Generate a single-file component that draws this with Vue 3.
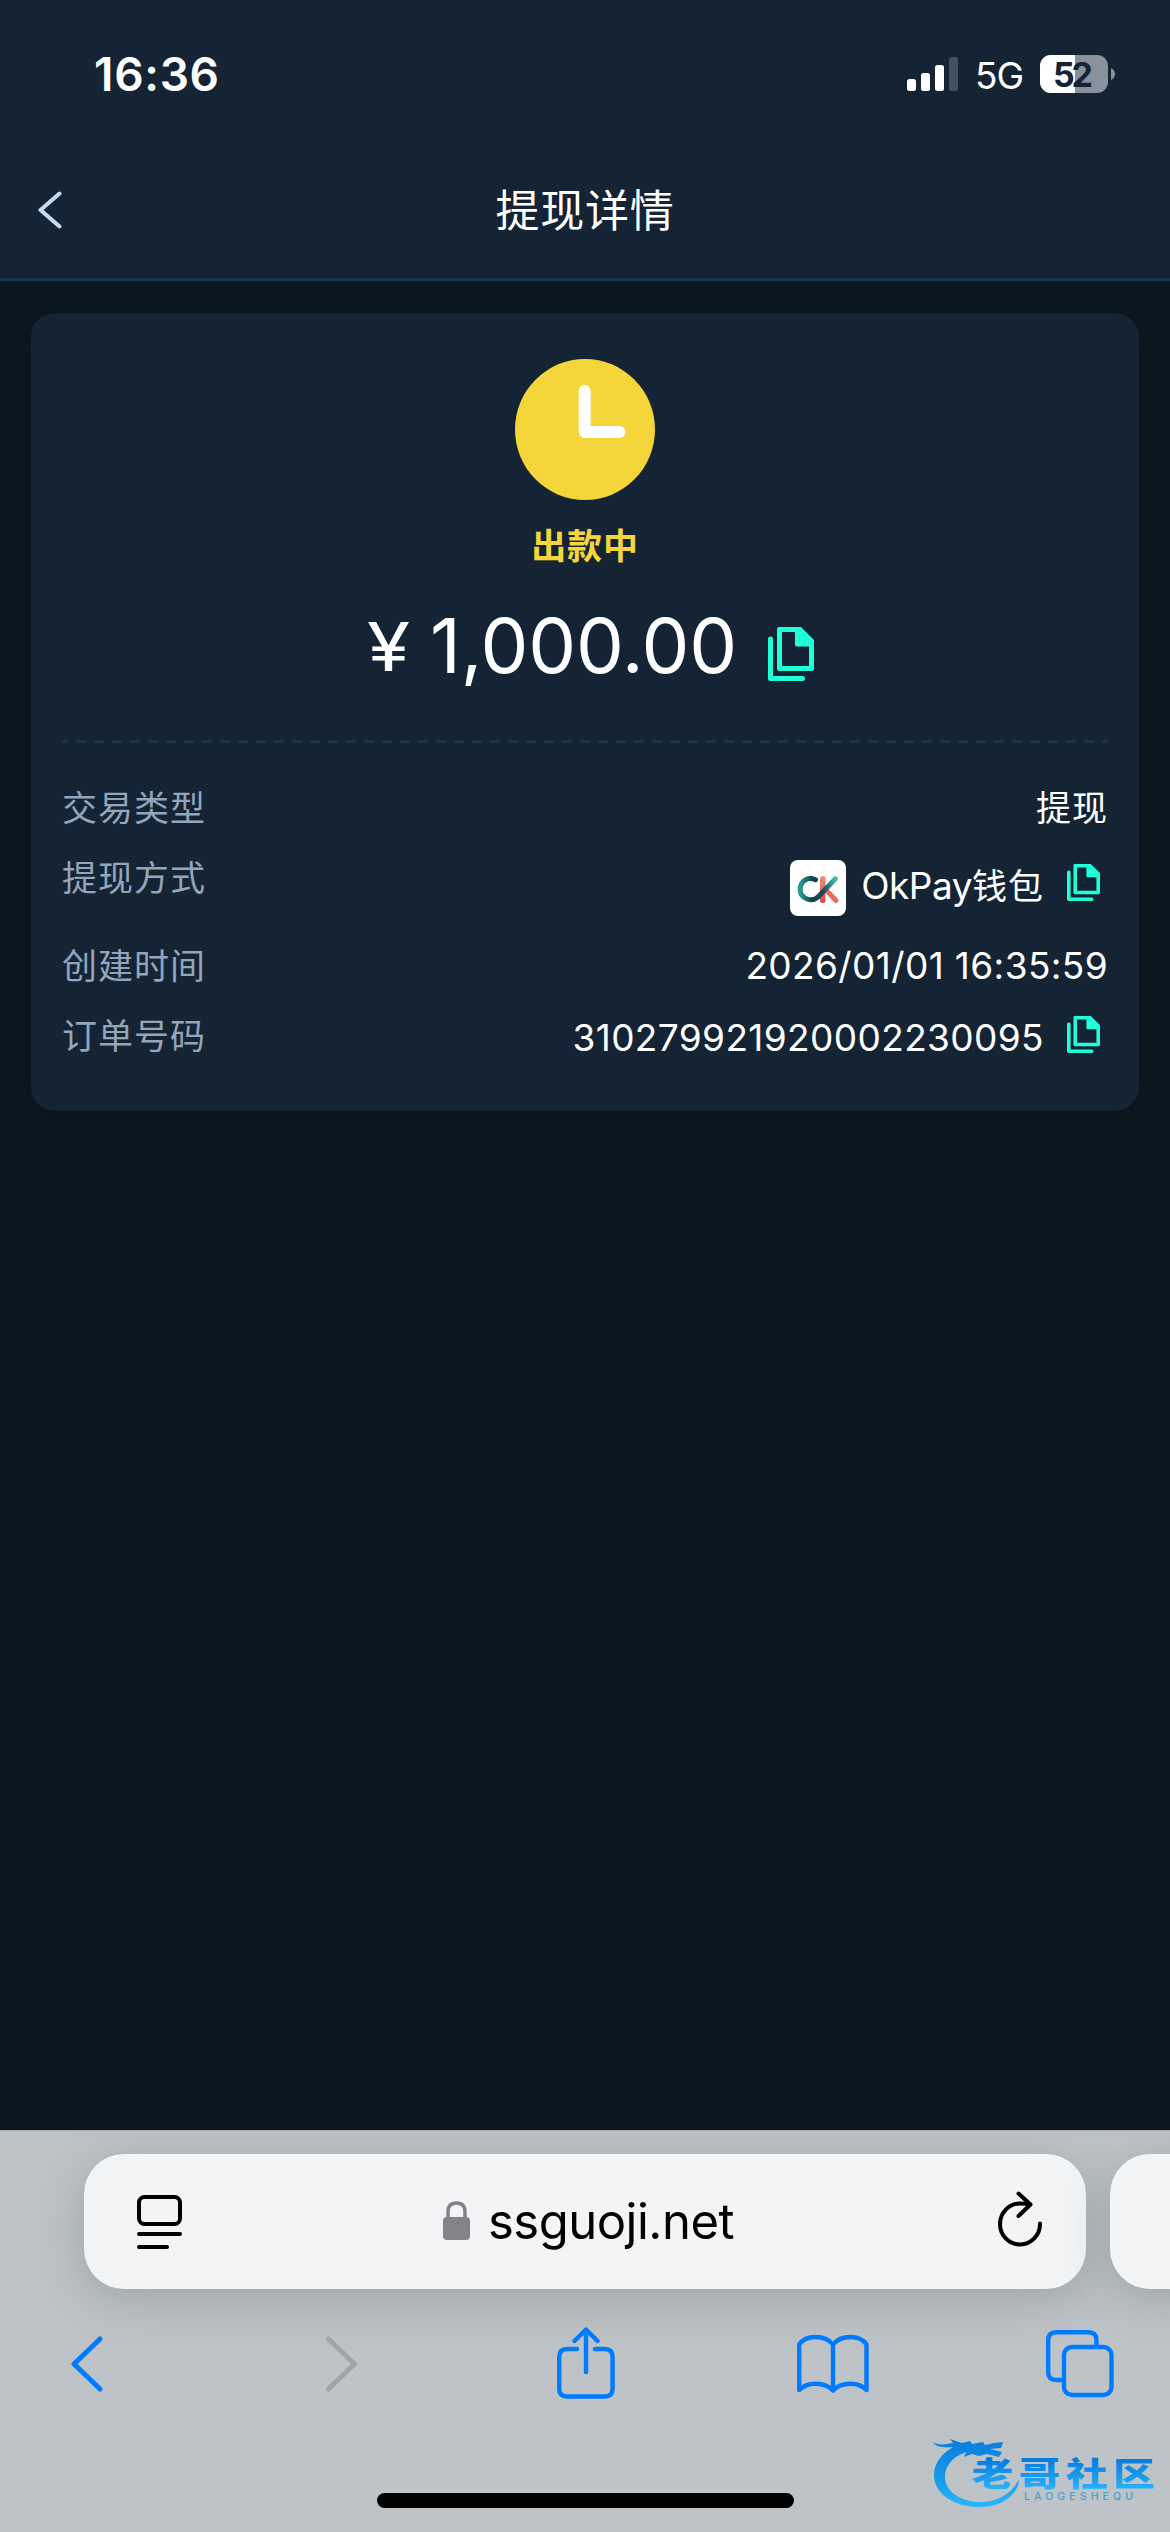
<script setup>
import { h } from 'vue'

const CopyIcon = () =>
  h('svg', { viewBox: '0 0 46 54', preserveAspectRatio: 'none', 'aria-hidden': 'true' }, [
    h('path', {
      d: 'M2.5 12V51.5H34.5',
      fill: 'none', stroke: '#1fffd8', 'stroke-width': 5,
      'stroke-linecap': 'round', 'stroke-linejoin': 'round',
    }),
    h('path', {
      d: 'M11 0H33L46 13V42Q46 44 44 44H11Q9 44 9 42V2Q9 0 11 0ZM14 5V39H41V19.500H29Q27 19.500 27 17.500V5Z',
      fill: '#1fffd8', 'fill-rule': 'evenodd',
    }),
  ])

const rows = [
  { key: 'type', label: '交易类型', cjk: '提现' },
  { key: 'method', label: '提现方式', logo: true, text: 'OkPay', cjk: '钱包', copy: true },
  { key: 'time', label: '创建时间', text: '2026/01/01 16:35:59' },
  { key: 'order', label: '订单号码', text: '310279921920002230095', copy: true },
]
</script>

<template>
  <div class="screen">
    <header class="top">
      <div class="status">
        <span class="clock">16:36</span>
        <div class="indicators">
          <svg class="signal" viewBox="0 0 51 34">
            <rect x="0" y="22" width="9" height="12" rx="2.500" fill="#fff" />
            <rect x="14" y="16" width="9" height="18" rx="2.500" fill="#fff" />
            <rect x="28" y="8" width="9" height="26" rx="2.500" fill="#fff" />
            <rect x="42" y="0" width="9" height="34" rx="2.500" fill="#43505d" />
          </svg>
          <span class="network">5G</span>
          <svg class="battery" viewBox="0 0 76 38">
            <defs>
              <clipPath id="battery-shape"><rect width="68" height="38" rx="11" /></clipPath>
            </defs>
            <g clip-path="url(#battery-shape)">
              <rect width="68" height="38" fill="#89929a" />
              <rect width="35" height="38" fill="#fff" />
            </g>
            <path d="M71 13Q75 15 75 19Q75 23 71 25Z" fill="#89929a" />
            <text x="33" y="31.500" text-anchor="middle" textLength="40" class="level">52</text>
          </svg>
        </div>
      </div>
      <nav class="nav">
        <svg class="nav-back" viewBox="0 0 24 38">
          <path d="M21.500 2.500L2.500 19L21.500 35.500" fill="none" stroke="#c3dcf1" stroke-width="4" stroke-linecap="round" stroke-linejoin="round" />
        </svg>
        <h1 class="title">提现详情</h1>
      </nav>
    </header>

    <main class="content">
      <section class="card">
        <svg class="pending" viewBox="0 0 140 141">
          <ellipse cx="70" cy="70.500" rx="70" ry="70.500" fill="#f4d63a" />
          <path d="M69.700 32V73H104.500" fill="none" stroke="#fff" stroke-width="12" stroke-linecap="round" stroke-linejoin="round" />
        </svg>
        <p class="state">出款中</p>
        <div class="amount">
          <span class="currency"><span class="yen">¥</span></span>
          <span class="sum">1,000.00</span>
          <CopyIcon class="copy-lg" />
        </div>
        <div class="divider"></div>
        <dl class="details">
          <div v-for="row in rows" :key="row.key" class="row" :class="row.key">
            <dt>{{ row.label }}</dt>
            <dd>
              <svg v-if="row.logo" class="logo" viewBox="0 0 56 56">
                <defs>
                  <linearGradient id="ring" x1="0" y1="0" x2="1" y2="0">
                    <stop offset="0" stop-color="#229b8d" />
                    <stop offset=".35" stop-color="#153f55" />
                    <stop offset=".65" stop-color="#17485b" />
                    <stop offset="1" stop-color="#47bda9" />
                  </linearGradient>
                  <linearGradient id="stem" x1="0" y1="0" x2="0" y2="1">
                    <stop offset="0" stop-color="#f28d7d" />
                    <stop offset="1" stop-color="#d4493f" />
                  </linearGradient>
                </defs>
                <rect width="56" height="56" rx="8" fill="#fff" />
                <rect x="30" y="16" width="5.500" height="27" rx="2.700" fill="url(#stem)" />
                <path d="M35 29L46 40.500" stroke="#ea6e5f" stroke-width="5" stroke-linecap="round" />
                <path d="M25.500 19.800C17 16 10 22 10.200 29.500C10.400 39 22 43 28.500 36.500L45.500 18.800" fill="none" stroke="url(#ring)" stroke-width="5" stroke-linecap="round" />
              </svg>
              <span v-if="row.text" class="latin">{{ row.text }}</span>
              <span v-if="row.cjk" class="cjk">{{ row.cjk }}</span>
              <CopyIcon v-if="row.copy" class="copy-sm" />
            </dd>
          </div>
        </dl>
      </section>
    </main>

    <footer class="browser">
      <div class="tabs-strip">
        <div class="address">
          <svg class="reader" viewBox="0 0 45 56" fill="none" stroke="#000" stroke-width="4" stroke-linecap="round">
            <rect x="2" y="3" width="41" height="27" rx="5.500" />
            <path d="M2 40H43M2 53H30" />
          </svg>
          <div class="site">
            <svg class="lock" viewBox="0 0 27 39">
              <path d="M5 18V11Q5 2 13.500 2Q22 2 22 11V18" fill="none" stroke="#848388" stroke-width="3.500" />
              <rect y="16" width="27" height="23" rx="4" fill="#848388" />
            </svg>
            <span class="host">ssguoji.net</span>
          </div>
          <svg class="reload" viewBox="0 0 44 56" fill="none" stroke="#000" stroke-width="4" stroke-linecap="round" stroke-linejoin="round">
            <path d="M42 32.500A20 20.500 0 1 1 22 12.500Q27 12.500 32 13.500M20.500 2.500L32.500 13.500L20.500 25" />
          </svg>
        </div>
        <div class="next-tab"></div>
      </div>
      <div class="toolbar">
        <svg class="t-back" viewBox="0 0 32 56"><path d="M29 3L3 28L29 53" /></svg>
        <svg class="t-forward" viewBox="0 0 32 56"><path d="M2.500 3L28.500 28L2.500 53" /></svg>
        <svg class="t-share" viewBox="0 0 58 72">
          <path d="M20 22H10Q2.200 22 2.200 30V61.500Q2.200 69.500 10 69.500H47.800Q55.600 69.500 55.600 61.500V30Q55.600 22 47.800 22H38M29 3V45M17.500 14L29 2.500L40.500 14" />
        </svg>
        <svg class="t-book" viewBox="0 0 72 60">
          <path d="M36 10.500C28 .500 9 .500 2.200 10.500V56C10 47.500 28 47.500 36 56.500C44 47.500 62 47.500 69.500 56V10.500C63 .500 44 .500 36 10.500V56.500" />
        </svg>
        <svg class="t-tabs" viewBox="0 0 68 68">
          <rect x="18" y="17" width="47.500" height="48" rx="8" />
          <path d="M50.500 16V10.200Q50.500 2.200 42.500 2.200H10.200Q2.200 2.200 2.200 10.200V42Q2.200 50 10.200 50H17" />
        </svg>
      </div>
      <div class="home"></div>
    </footer>

    <svg class="watermark" viewBox="0 0 230 74">
      <defs>
        <linearGradient id="wm" gradientUnits="userSpaceOnUse" x1="0" y1="4" x2="0" y2="72">
          <stop offset="0" stop-color="#087ddd" />
          <stop offset=".65" stop-color="#189eed" />
          <stop offset="1" stop-color="#2bb8ff" />
        </linearGradient>
        <linearGradient id="wm-text" gradientUnits="userSpaceOnUse" x1="0" y1="24" x2="0" y2="54">
          <stop offset="0" stop-color="#047be0" />
          <stop offset="1" stop-color="#28b2fb" />
        </linearGradient>
      </defs>
      <path d="M2 7C10 11 16 9 23 8L20 4L32 8L40 6L42 9L53 7L55 10L64 8L73 7L71 13L60 14L72 17L69 22L57 19L49 21L42 19L34 22L36 17C22 22 14 32 15 44C17 60 36 68 54 67C70 66 83 57 89 44C89 58 73 72 52 72C28 73 4 61 4 40C4 27 13 18 23 12C14 13 7 12 2 7Z" fill="url(#wm)" />
      <g transform="scale(1.280 1)">
        <text y="51" textLength="143" x="32.500" class="wm-cjk" fill="url(#wm-text)">老哥社区</text>
      </g>
      <text x="94" y="64.500" textLength="109" class="wm-latin">LAOGESHEQU</text>
    </svg>
  </div>
</template>

<style>
body { margin: 0; background: #0c1820; }
</style>

<style scoped>
.screen {
  position: relative;
  display: flex;
  flex-direction: column;
  width: 1170px;
  height: 2532px;
  overflow: hidden;
  background: #0c1820;
  color: #fff;
  font-family: Inter, "Noto Sans CJK SC", sans-serif;
}
svg { display: block; flex: none; }
.top { background: #142434; border-bottom: 3px solid #1a344a; }
.status {
  display: flex;
  justify-content: space-between;
  align-items: center;
  height: 148px;
  padding: 0 54px 0 94px;
}
.clock { font-size: 46px; font-weight: 600; line-height: 1; letter-spacing: .7px; }
.indicators { display: flex; align-items: center; }
.signal { width: 51px; height: 34px; }
.network { width: 82px; text-align: center; font-size: 37px; line-height: 1; margin-top: 3px; letter-spacing: -1px; }
.battery { width: 76px; height: 38px; }
.level { font: 700 34px Inter, sans-serif; fill: #142434; }
.nav {
  display: grid;
  grid-template-columns: 100px 1fr 100px;
  align-items: center;
  height: 123px;
  padding-bottom: 7px;
}
.nav-back { width: 24px; height: 38px; margin-left: 38px; }
.title {
  margin: 0 0 4px;
  text-align: center;
  font: 400 44px/60px "Noto Sans CJK SC", sans-serif;
  letter-spacing: .8px;
}
.content { flex: 1; padding: 32px 31px 0; }
.card {
  box-sizing: border-box;
  height: 798px;
  padding: 46px 31px 0;
  border-radius: 24px;
  background: #142434;
  box-shadow: 0 6px 18px rgba(8, 16, 25, .5);
}
.pending { width: 140px; height: 141px; margin: 0 auto; }
.state {
  margin: 19px 0 3px;
  text-align: center;
  color: #f4d63a;
  font: 700 35px/50px "Noto Sans CJK SC", sans-serif;
  letter-spacing: .8px;
}
.amount {
  display: flex;
  align-items: flex-start;
  height: 168px;
  padding-left: 305px;
}
.currency { width: 63px; font-size: 68px; line-height: 68px; margin-top: 40px; }
.yen { display: inline-block; transform: scaleX(1.15); transform-origin: 0 50%; }
.sum { width: 337px; font-size: 76px; line-height: 76px; font-weight: 400; margin-top: 35px; letter-spacing: -.2px; }
.copy-lg { width: 46px; height: 54px; margin: 55px 0 0 1px; }
.divider {
  height: 3px;
  background: repeating-linear-gradient(90deg, #1a344a 0 10px, transparent 10px 18px) -4px 0 / 1116px 3px no-repeat;
}
.details { margin: 0; padding-top: 30px; }
.row { display: flex; justify-content: space-between; align-items: flex-start; height: 70px; }
.row.method { height: 88px; }
dt {
  color: #92a5ba;
  font: 400 35px/66px "Noto Sans CJK SC", sans-serif;
  letter-spacing: 1px;
}
dd { display: flex; align-items: center; height: 70px; margin: 0; }
.latin { font-size: 37px; line-height: 68px; letter-spacing: .38px; }
.cjk { font: 400 35px/66px "Noto Sans CJK SC", sans-serif; letter-spacing: 1px; margin-bottom: 4px; }
.method dd { padding-top: 8px; padding-right: 8px; }
.method .latin { letter-spacing: -.5px; }
.order dd { padding-top: 2px; padding-right: 8px; }
.logo { width: 56px; height: 56px; margin: 4px 15px 0 0; }
.copy-sm { width: 33px; height: 37px; margin: 0 0 7px 23px; }
.browser {
  height: 402px;
  background: #bec3c7;
  border-top: 1px solid #a6a8ae;
  box-sizing: border-box;
  overflow: hidden;
}
.tabs-strip { display: flex; gap: 24px; padding: 23px 0 0 84px; }
.address, .next-tab {
  box-sizing: border-box;
  height: 135px;
  border-radius: 40px;
  background: #f2f4f5;
  box-shadow: 0 10px 48px rgba(70, 85, 90, .27);
}
.address {
  display: flex;
  align-items: center;
  justify-content: space-between;
  width: 1002px;
  flex: none;
  padding: 0 44px 0 53px;
}
.next-tab { width: 120px; flex: none; }
.reader { width: 45px; height: 56px; margin-top: 1px; }
.site { display: flex; align-items: center; color: #000; padding-right: 3px; }
.lock { width: 27px; height: 39px; margin: 0 18px 2px 0; }
.host { font-size: 49px; line-height: 60px; letter-spacing: -.5px; }
.reload { width: 44px; height: 56px; margin-bottom: 6px; }
.toolbar {
  display: flex;
  align-items: center;
  height: 150px;
  padding-left: 71px;
}
.toolbar svg { fill: none; stroke: #007aff; stroke-width: 4.400; stroke-linecap: round; stroke-linejoin: round; }
.toolbar .t-back, .toolbar .t-forward { width: 32px; height: 56px; stroke-width: 5; }
.toolbar .t-forward { stroke: #a2a5a8; margin-left: 223px; }
.t-share { width: 58px; height: 72px; margin: 0 0 3px 199px; }
.t-book { width: 72px; height: 60px; margin-left: 182px; }
.t-tabs { width: 68px; height: 68px; margin-left: 177px; }
.home { width: 417px; height: 15px; margin: 54px auto 0; border-radius: 8px; background: #000; }
.watermark { position: absolute; left: 930px; top: 2435px; width: 230px; height: 74px; }
.wm-cjk { font: 900 32.500px "Noto Sans CJK SC", sans-serif; }
.wm-latin { font: 500 10.500px Inter, sans-serif; fill: #4b9fd6; }
</style>
